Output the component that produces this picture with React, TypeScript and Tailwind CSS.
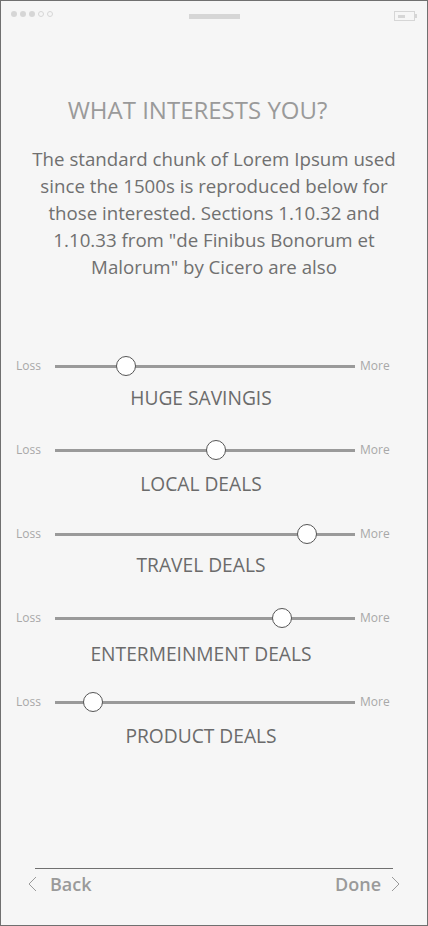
import React from 'react'

interface Interest {
  label: string
  thumb: number
  rowGap: string
  labelGap: string
}

const interests: Interest[] = [
  { label: 'HUGE SAVINGIS', thumb: 71, rowGap: 'mt-[76px]', labelGap: 'mt-[10px]' },
  { label: 'LOCAL DEALS', thumb: 161, rowGap: 'mt-[30px]', labelGap: 'mt-[12px]' },
  { label: 'TRAVEL DEALS', thumb: 252, rowGap: 'mt-[28px]', labelGap: 'mt-[9px]' },
  { label: 'ENTERMEINMENT DEALS', thumb: 227, rowGap: 'mt-[31px]', labelGap: 'mt-[14px]' },
  { label: 'PRODUCT DEALS', thumb: 38, rowGap: 'mt-[26px]', labelGap: 'mt-[12px]' },
]

const font = { fontFamily: '"Open Sans", "Noto Sans", sans-serif' }

function StatusBar() {
  return (
    <div className="flex items-center justify-between h-[26px] pl-[10px] pr-[10px]">
      <div className="flex items-center gap-[3px] w-[60px]">
        <span className="w-[6px] h-[6px] rounded-full bg-[#d6d6d6]" />
        <span className="w-[6px] h-[6px] rounded-full bg-[#d6d6d6]" />
        <span className="w-[6px] h-[6px] rounded-full bg-[#d6d6d6]" />
        <span className="w-[6px] h-[6px] rounded-full border border-[#d6d6d6]" />
        <span className="w-[6px] h-[6px] rounded-full border border-[#d6d6d6]" />
      </div>
      <div className="w-[51px] h-[5px] bg-[#d6d6d6] mt-[4px]" />
      <div className="w-[60px] flex justify-end items-center mt-[4px]">
        <div className="w-[21px] h-[10px] border border-[#d6d6d6] flex items-center pl-[3px]">
          <div className="w-[7px] h-[3px] bg-[#d6d6d6]" />
        </div>
        <div className="w-[2px] h-[4px] bg-[#d6d6d6]" />
      </div>
    </div>
  )
}

function Slider({ item }: { item: Interest }) {
  return (
    <div className={item.rowGap}>
      <div className="flex items-center h-[20px]">
        <span className="w-[54px] pl-[15px] text-[12px] text-[#a8a8a8]">Loss</span>
        <div className="relative w-[300px] h-[3px] bg-[#9a9a9a]">
          <div
            className="absolute top-[-9px] w-[20px] h-[20px] rounded-full bg-white border border-[#555]"
            style={{ left: item.thumb - 10 }}
          />
        </div>
        <span className="pl-[5px] text-[12px] text-[#a8a8a8]">More</span>
      </div>
      <div className={`${item.labelGap} w-[400px] text-center text-[19.2px] leading-[24px] text-[#6b6b6b]`}>
        {item.label}
      </div>
    </div>
  )
}

export default function App() {
  return (
    <div className="w-[428px] h-[926px] border border-[#707070] bg-[#f6f6f6] flex flex-col" style={font}>
      <StatusBar />
      <div className="mt-[68px] text-center text-[24px] leading-[30px] text-[#9a9a9a] pr-[33px]">
        WHAT INTERESTS YOU?
      </div>
      <p className="mt-[20px] px-[20px] text-center text-[18.7px] leading-[27px] text-[#707070]">
        The standard chunk of Lorem Ipsum used since the 1500s is reproduced below for those interested. Sections 1.10.32 and
        1.10.33 from "de Finibus Bonorum et Malorum" by Cicero are also
      </p>
      {interests.map((item) => (
        <Slider key={item.label} item={item} />
      ))}
      <div className="flex-1" />
      <div className="mx-[34px] h-px bg-[#707070]" />
      <div className="flex items-center justify-between h-[30px] mb-[26px] pl-[27px] pr-[27px]">
        <div className="flex items-center gap-[13px]">
          <svg width="9" height="16" viewBox="0 0 9 16" fill="none">
            <path d="M8 1L1 8l7 7" stroke="#9a9a9a" strokeWidth="1" />
          </svg>
          <span className="text-[18px] font-semibold text-[#9a9a9a]">Back</span>
        </div>
        <div className="flex items-center gap-[10px]">
          <span className="text-[18px] font-semibold text-[#9a9a9a]">Done</span>
          <svg width="9" height="16" viewBox="0 0 9 16" fill="none">
            <path d="M1 1l7 7-7 7" stroke="#9a9a9a" strokeWidth="1" />
          </svg>
        </div>
      </div>
    </div>
  )
}
